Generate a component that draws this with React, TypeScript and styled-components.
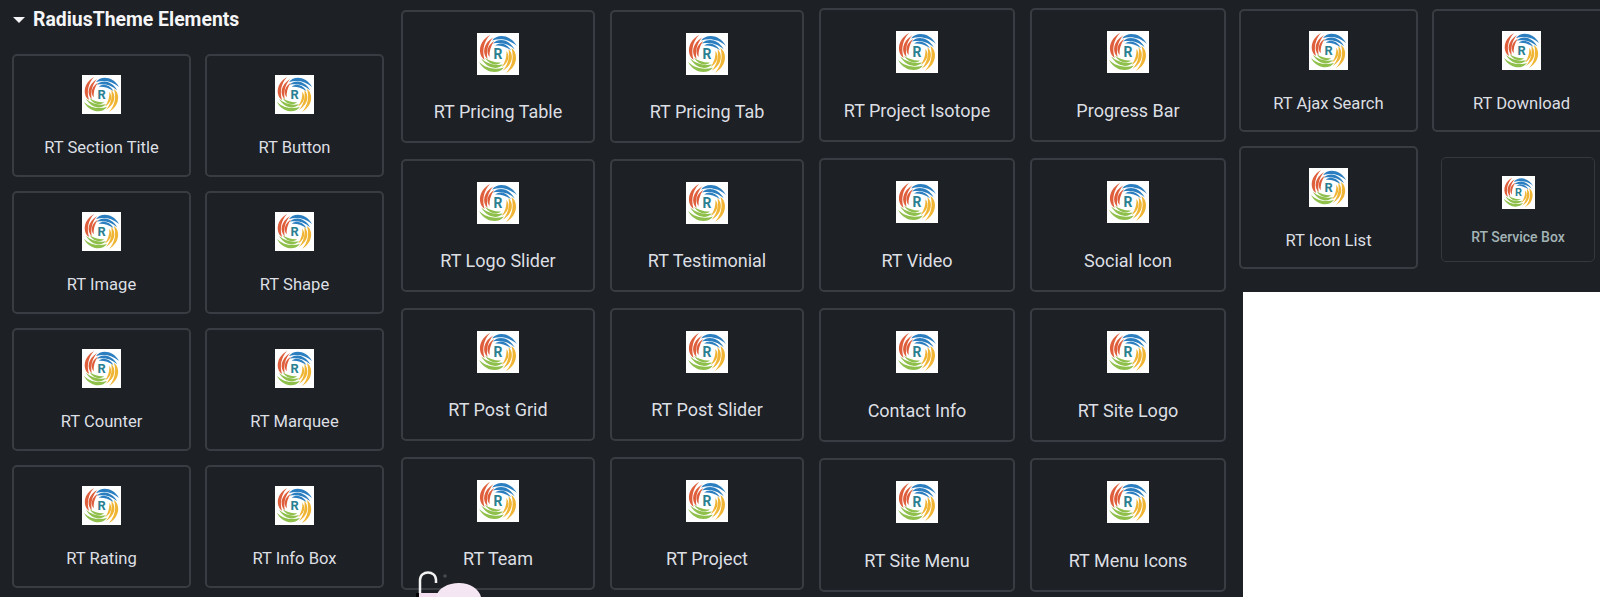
import React from 'react';
import styled, {createGlobalStyle} from 'styled-components';

const GlobalStyle = createGlobalStyle`
  html, body {
    margin: 0;
    padding: 0;
    height: 100%;
    overflow: hidden;
    background: #1d2024;
  }
`;

const Sheet = styled.div`
  position: relative;
  display: flex;
  height: 597px;
  padding-left: 12px;
  background: #1d2024;
  font-family: Roboto, "Liberation Sans", sans-serif;
  overflow: hidden;
`;

const Column = styled.section<{$top: number; $width: number; $gapRight: number}>`
  display: flex;
  flex-direction: column;
  flex: none;
  box-sizing: border-box;
  width: ${p => p.$width}px;
  margin-right: ${p => p.$gapRight}px;
  padding-top: ${p => p.$top}px;
`;

const Heading = styled.h2`
  display: flex;
  align-items: center;
  gap: 8px;
  margin: 0 0 23px;
  height: 22px;
  padding-top: 9px;
  font-size: 19.4px;
  line-height: 22px;
  font-weight: 700;
  color: #f4f5f6;
`;

const Caret = styled.span`
  width: 0;
  height: 0;
  margin-left: 1px;
  border-left: 6px solid transparent;
  border-right: 6px solid transparent;
  border-top: 6px solid #f4f5f6;
`;

const CardGrid = styled.div<{$cardWidth: number; $cardHeight: number; $colGap: number; $rowGap: number}>`
  display: grid;
  grid-template-columns: repeat(2, ${p => p.$cardWidth}px);
  grid-auto-rows: ${p => p.$cardHeight}px;
  column-gap: ${p => p.$colGap}px;
  row-gap: ${p => p.$rowGap}px;
`;

const Card = styled.div<{$inset: number; $gap: number}>`
  display: flex;
  flex-direction: column;
  align-items: center;
  box-sizing: border-box;
  padding-top: ${p => p.$inset}px;
  gap: ${p => p.$gap}px;
  border: 2px solid #393d43;
  border-radius: 5px;
`;

const SmallCard = styled(Card)`
  width: 154px;
  height: 105px;
  margin: 11px 0 0 9px;
  border-width: 1px;
  border-color: #35393e;
`;

const Label = styled.span<{$size: number; $tone?: string; $weight?: number}>`
  font-size: ${p => p.$size}px;
  font-weight: ${p => p.$weight ?? 400};
  line-height: ${p => Math.round(p.$size) + 4}px;
  color: ${p => p.$tone ?? '#dcdfe3'};
  white-space: nowrap;
`;

const BlankArea = styled.div`
  flex: 1;
  margin: 23px -20px 0 4px;
  background: #fff;
`;

const CursorMark = styled.svg`
  position: absolute;
  left: 416px;
  top: 570px;
`;

const blades = [
  'M36 18C48 1 80 3 95 31C78 15 56 12 36 18Z',
  'M38 25C52 11 76 15 90 39C74 25 56 22 38 25Z',
  'M43 30C54 21 70 24 81 41C68 32 55 29 43 30Z',
];

const petals = [
  {color: '#2b7fc0', turn: 0},
  {color: '#f0b534', turn: 90},
  {color: '#8fc04c', turn: 180},
  {color: '#df5f3c', turn: 270},
];

const Logo = ({size}: {size: number}) => (
  <svg width={size} height={size} viewBox="0 0 100 100" style={{flex: 'none'}}>
    <rect width="100" height="100" fill="#fff" />
    {petals.map(petal => (
      <g key={petal.turn} fill={petal.color} transform={`rotate(${petal.turn} 50 50)`}>
        {blades.map(d => <path key={d} d={d} />)}
      </g>
    ))}
    <text x="50" y="62" textAnchor="middle" fontSize="33" fontWeight="700" fontFamily="Roboto, sans-serif" fill="#2a7f92">R</text>
  </svg>
);

type Variant = {logo: number; inset: number; gap: number; text: number};

const Element = ({name, v}: {name: string; v: Variant}) => (
  <Card $inset={v.inset} $gap={v.gap}>
    <Logo size={v.logo} />
    <Label $size={v.text}>{name}</Label>
  </Card>
);

const small: Variant = {logo: 39, inset: 19, gap: 23, text: 16.6};
const large: Variant = {logo: 42, inset: 21, gap: 26, text: 18};
const largeWide: Variant = {logo: 42, inset: 21, gap: 27, text: 18};
const top: Variant = {logo: 39, inset: 20, gap: 23, text: 16.6};

const basics = [
  'RT Section Title', 'RT Button', 'RT Image', 'RT Shape',
  'RT Counter', 'RT Marquee', 'RT Rating', 'RT Info Box',
];
const content = [
  'RT Pricing Table', 'RT Pricing Tab', 'RT Logo Slider', 'RT Testimonial',
  'RT Post Grid', 'RT Post Slider', 'RT Team', 'RT Project',
];
const site = [
  'RT Project Isotope', 'Progress Bar', 'RT Video', 'Social Icon',
  'Contact Info', 'RT Site Logo', 'RT Site Menu', 'RT Menu Icons',
];

export default function App() {
  return (
    <Sheet>
      <GlobalStyle />
      <Column $top={0} $width={372} $gapRight={17}>
        <Heading><Caret />RadiusTheme Elements</Heading>
        <CardGrid $cardWidth={179} $cardHeight={123} $colGap={14} $rowGap={14}>
          {basics.map(name => <Element key={name} name={name} v={small} />)}
        </CardGrid>
      </Column>
      <Column $top={10} $width={403} $gapRight={15}>
        <CardGrid $cardWidth={194} $cardHeight={133} $colGap={15} $rowGap={16}>
          {content.map(name => <Element key={name} name={name} v={large} />)}
        </CardGrid>
      </Column>
      <Column $top={8} $width={407} $gapRight={13}>
        <CardGrid $cardWidth={196} $cardHeight={134} $colGap={15} $rowGap={16}>
          {site.map(name => <Element key={name} name={name} v={largeWide} />)}
        </CardGrid>
      </Column>
      <Column $top={9} $width={361} $gapRight={0}>
        <CardGrid $cardWidth={179} $cardHeight={123} $colGap={14} $rowGap={14}>
          <Element name="RT Ajax Search" v={top} />
          <Element name="RT Download" v={top} />
          <Element name="RT Icon List" v={top} />
          <SmallCard $inset={18} $gap={19}>
            <Logo size={33} />
            <Label $size={14} $tone="#a3b4b7" $weight={500}>RT Service Box</Label>
          </SmallCard>
        </CardGrid>
        <BlankArea />
      </Column>
      <CursorMark width="70" height="27" viewBox="0 0 70 27">
        <path d="M4 24V10C4 0 20 0 20 10V13" fill="none" stroke="#f2f2f2" strokeWidth="2.5" />
        <rect x="0" y="23" width="3" height="4" fill="#000" />
        <rect x="3" y="23" width="23" height="4" fill="#f3dff0" />
        <path d="M20 27C22 18 32 13 43 13C54 13 63 19 65 27Z" fill="#f5e6f4" />
        <path d="M27 6H31M29 4V8" stroke="#55585c" strokeWidth="1" />
      </CursorMark>
    </Sheet>
  );
}
